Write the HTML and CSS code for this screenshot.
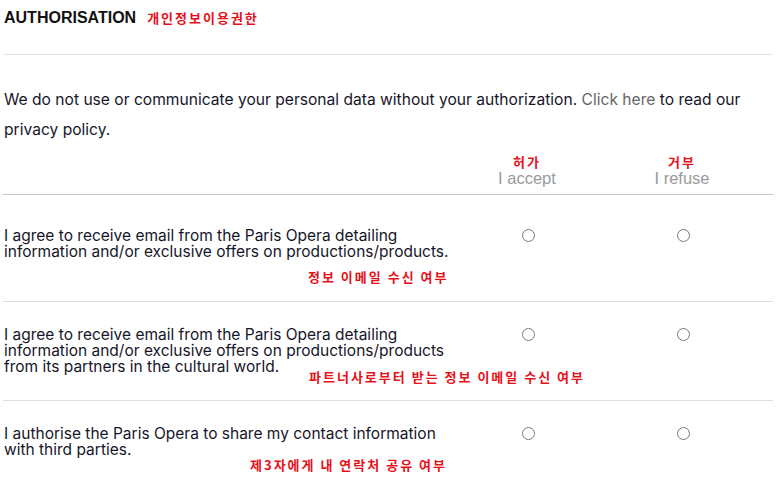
FILE: index.html
```html
<!DOCTYPE html>
<html lang="en">
<head>
  <meta charset="UTF-8">
  <title>Authorisation</title>
  <link rel="stylesheet" href="styles.css">
</head>
<body>

<div class="consent">
  <div class="consent-head">
    <h2>AUTHORISATION</h2>
    <span class="note">개인정보이용권한</span>
  </div>

  <p class="intro">We do not use or communicate your personal data without your authorization. <a href="#">Click here</a> to read our privacy policy.</p>

  <div class="row row-head">
    <div></div>
    <div class="col-title"><span class="note">허가</span>I accept</div>
    <div class="col-title"><span class="note">거부</span>I refuse</div>
  </div>

  <div class="row first">
    <div class="label">I agree to receive email from the Paris Opera detailing information and/or exclusive offers on productions/products.</div>
    <div class="choice"><span class="radio"></span></div>
    <div class="choice"><span class="radio"></span></div>
    <span class="note tag tag-1">정보 이메일 수신 여부</span>
  </div>

  <div class="row">
    <div class="label">I agree to receive email from the Paris Opera detailing information and/or exclusive offers on productions/products from its partners in the cultural world.</div>
    <div class="choice"><span class="radio"></span></div>
    <div class="choice"><span class="radio"></span></div>
    <span class="note tag tag-2">파트너사로부터 받는 정보 이메일 수신 여부</span>
  </div>

  <div class="row last">
    <div class="label">I authorise the Paris Opera to share my contact information with third parties.</div>
    <div class="choice"><span class="radio"></span></div>
    <div class="choice"><span class="radio"></span></div>
    <span class="note tag tag-3">제3자에게 내 연락처 공유 여부</span>
  </div>
</div>

</body>
</html>
```

FILE: styles.css
```css
body {
  margin: 0;
  background: #fff;
  font-family: Inter, "Liberation Sans", sans-serif;
  color: #16162a;
  overflow: hidden;
}

.consent {
  width: 770px;
  margin-left: 3px;
}

.consent-head {
  display: flex;
  align-items: baseline;
  gap: 11px;
  padding: 8px 0 0 1px;
  height: 46px;
  border-bottom: 1px solid #e3e3e3;
}

.consent-head h2 {
  margin: 0;
  font-family: "Liberation Sans", Arial, sans-serif;
  font-size: 16px;
  font-weight: bold;
  color: #111;
}

.note {
  font-family: "Noto Sans CJK KR", sans-serif;
  font-size: 13px;
  font-weight: bold;
  color: #e8101a;
  letter-spacing: 2px;
}

.intro {
  margin: 30px 0 0 1px;
  font-size: 15.6px;
  line-height: 30px;
}

.intro a {
  color: #666;
  text-decoration: none;
}

.row {
  position: relative;
  display: grid;
  grid-template-columns: 448px 155px 155px;
  align-items: start;
  padding: 25px 0;
  border-bottom: 1px solid #dedede;
}

.row.first {
  padding: 33px 0 41px;
}

.row.last {
  border-bottom: none;
}

.row-head {
  padding: 8px 0 7px;
  border-bottom-color: #c8c8c8;
}

.row-head .col-title {
  margin-left: -3px;
}

.col-title {
  display: flex;
  flex-direction: column;
  align-items: center;
  font-family: "Liberation Sans", Arial, sans-serif;
  font-size: 16.5px;
  line-height: 17px;
  color: #9a9a9a;
}

.col-title .note {
  line-height: 17px;
}

.label {
  padding-left: 1px;
  font-size: 15.5px;
  line-height: 16px;
}

.choice {
  display: flex;
  justify-content: center;
  padding-top: 1px;
}

.radio {
  width: 11px;
  height: 11px;
  border: 1px solid #777;
  border-radius: 50%;
}

.tag {
  position: absolute;
  line-height: 19px;
}

.tag-1 { left: 305px; top: 72px; }
.tag-2 { left: 306px; top: 65px; }
.tag-3 { left: 247px; top: 54px; }
```
